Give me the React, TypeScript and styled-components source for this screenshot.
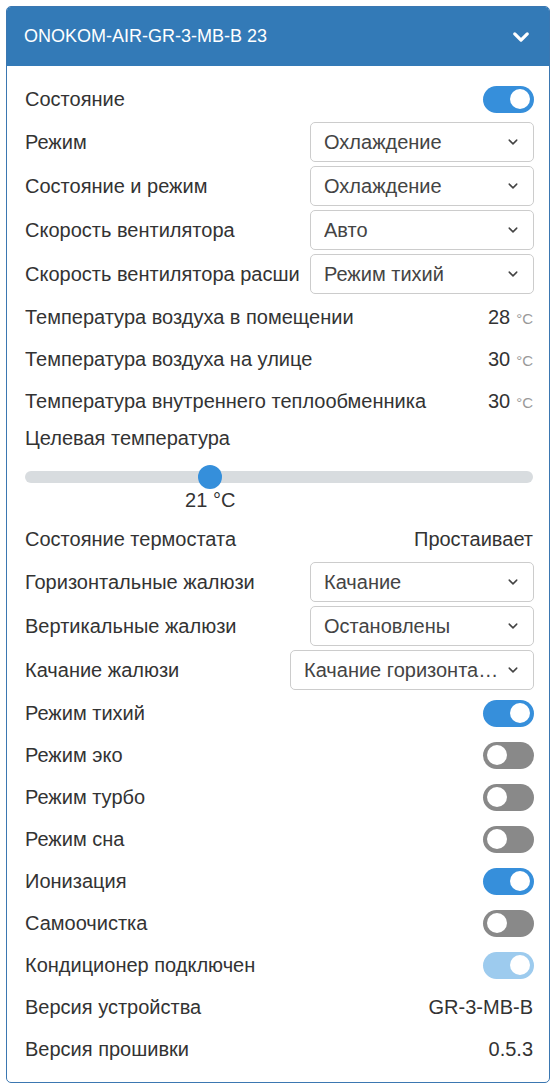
import React from "react";
import styled, { createGlobalStyle } from "styled-components";

const Global = createGlobalStyle`
  html, body { margin: 0; padding: 0; background: #fff; }
  body { font-family: "Liberation Sans", Arial, sans-serif; color: #333; }
  * { box-sizing: border-box; }
`;

const Page = styled.div`
  padding: 6px;
`;

const Card = styled.div`
  border: 1px solid #3b77b1;
  border-radius: 5px;
  overflow: hidden;
  background: #fff;
`;

const Header = styled.div`
  height: 59px;
  background: #337ab7;
  color: #fff;
  display: flex;
  align-items: center;
  justify-content: space-between;
  padding: 0 18px 0 17px;
  font-size: 18px;
`;

const Body = styled.div`
  padding: 12px 15px 12px 18px;
  display: flex;
  flex-direction: column;
`;

const Row = styled.div<{ $h: number }>`
  height: ${(p) => p.$h}px;
  display: flex;
  align-items: center;
  justify-content: space-between;
  gap: 10px;
  font-size: 20px;
`;

const Label = styled.div`
  flex: 1 1 auto;
  min-width: 0;
  overflow: hidden;
  white-space: nowrap;
  color: #333;
`;

const Value = styled.div`
  flex: 0 0 auto;
  white-space: nowrap;
  color: #333;
  padding-right: 1px;
`;

const Unit = styled.span`
  font-size: 15px;
  color: #999;
  margin-left: 6px;
`;

const SelectBox = styled.div<{ $w: number }>`
  flex: 0 0 auto;
  width: ${(p) => p.$w}px;
  height: 40px;
  border: 1px solid #ccc;
  border-radius: 5px;
  display: flex;
  align-items: center;
  justify-content: space-between;
  gap: 6px;
  padding: 0 14px 0 13px;
  color: #444;
  font-size: 20px;
  background: #fff;
`;

const SelectText = styled.span`
  overflow: hidden;
  white-space: nowrap;
  text-overflow: ellipsis;
  min-width: 0;
`;

const Switch = styled.div<{ $on: boolean; $disabled?: boolean }>`
  flex: 0 0 auto;
  width: 51px;
  height: 27px;
  border-radius: 14px;
  background: ${(p) =>
    p.$disabled ? "#9dcbee" : p.$on ? "#368fdb" : "#898989"};
  display: flex;
  align-items: center;
  justify-content: ${(p) => (p.$on ? "flex-end" : "flex-start")};
  padding: 0 4px;
`;

const Knob = styled.div`
  width: 20px;
  height: 20px;
  border-radius: 50%;
  background: #fff;
`;

const SliderBlock = styled.div`
  height: 64px;
  display: flex;
  flex-direction: column;
  padding-top: 17px;
`;

const Track = styled.div`
  position: relative;
  height: 12px;
  border-radius: 6px;
  background: #d8dcdf;
  margin-right: 1px;
`;

const Thumb = styled.div`
  position: absolute;
  top: 50%;
  width: 24px;
  height: 24px;
  margin: -12px 0 0 -12px;
  border-radius: 50%;
  background: #358fdb;
`;

const SliderValue = styled.div`
  position: relative;
  height: 30px;
  font-size: 20px;
  color: #333;
`;

const SliderValueText = styled.span`
  position: absolute;
  top: 6px;
  transform: translateX(-50%);
  white-space: nowrap;
`;

const Chevron = ({ size, stroke, color }: { size: number; stroke: number; color: string }) => (
  <svg width={size} height={size} viewBox="0 0 16 16" fill="none" style={{ flex: "0 0 auto" }}>
    <path d="M3 5.5 L8 10.5 L13 5.5" stroke={color} strokeWidth={stroke} strokeLinecap="round" strokeLinejoin="round" />
  </svg>
);

type Item =
  | { kind: "switch"; label: string; on: boolean; disabled?: boolean }
  | { kind: "select"; label: string; value: string; w?: number }
  | { kind: "text"; label: string; value: string; unit?: string }
  | { kind: "title"; label: string }
  | { kind: "slider"; value: number; min: number; max: number };

const items: Item[] = [
  { kind: "switch", label: "Состояние", on: true },
  { kind: "select", label: "Режим", value: "Охлаждение" },
  { kind: "select", label: "Состояние и режим", value: "Охлаждение" },
  { kind: "select", label: "Скорость вентилятора", value: "Авто" },
  { kind: "select", label: "Скорость вентилятора расширенная", value: "Режим тихий" },
  { kind: "text", label: "Температура воздуха в помещении", value: "28", unit: "°C" },
  { kind: "text", label: "Температура воздуха на улице", value: "30", unit: "°C" },
  { kind: "text", label: "Температура внутреннего теплообменника", value: "30", unit: "°C" },
  { kind: "title", label: "Целевая температура" },
  { kind: "slider", value: 21, min: 16, max: 30 },
  { kind: "text", label: "Состояние термостата", value: "Простаивает" },
  { kind: "select", label: "Горизонтальные жалюзи", value: "Качание" },
  { kind: "select", label: "Вертикальные жалюзи", value: "Остановлены" },
  { kind: "select", label: "Качание жалюзи", value: "Качание горизонтальное", w: 244 },
  { kind: "switch", label: "Режим тихий", on: true },
  { kind: "switch", label: "Режим эко", on: false },
  { kind: "switch", label: "Режим турбо", on: false },
  { kind: "switch", label: "Режим сна", on: false },
  { kind: "switch", label: "Ионизация", on: true },
  { kind: "switch", label: "Самоочистка", on: false },
  { kind: "switch", label: "Кондиционер подключен", on: true, disabled: true },
  { kind: "text", label: "Версия устройства", value: "GR-3-MB-B" },
  { kind: "text", label: "Версия прошивки", value: "0.5.3" },
];

export default function App() {
  return (
    <>
      <Global />
      <Page>
        <Card>
          <Header>
            <span>ONOKOM-AIR-GR-3-MB-B 23</span>
            <Chevron size={20} stroke={2.6} color="#fff" />
          </Header>
          <Body>
            {items.map((it, i) => {
              switch (it.kind) {
                case "switch":
                  return (
                    <Row key={i} $h={42}>
                      <Label>{it.label}</Label>
                      <Switch $on={it.on} $disabled={it.disabled}>
                        <Knob />
                      </Switch>
                    </Row>
                  );
                case "select":
                  return (
                    <Row key={i} $h={44}>
                      <Label>{it.label}</Label>
                      <SelectBox $w={it.w ?? 224}>
                        <SelectText>{it.value}</SelectText>
                        <Chevron size={12} stroke={2} color="#444" />
                      </SelectBox>
                    </Row>
                  );
                case "text":
                  return (
                    <Row key={i} $h={42}>
                      <Label>{it.label}</Label>
                      <Value>
                        {it.value}
                        {it.unit && <Unit>{it.unit}</Unit>}
                      </Value>
                    </Row>
                  );
                case "title":
                  return (
                    <Row key={i} $h={32}>
                      <Label>{it.label}</Label>
                    </Row>
                  );
                case "slider": {
                  const frac = (it.value - it.min) / (it.max - it.min);
                  const pos = `calc(12px + ${frac} * (100% - 24px))`;
                  return (
                    <SliderBlock key={i}>
                      <Track>
                        <Thumb style={{ left: pos }} />
                      </Track>
                      <SliderValue>
                        <SliderValueText style={{ left: pos }}>{it.value} °C</SliderValueText>
                      </SliderValue>
                    </SliderBlock>
                  );
                }
              }
            })}
          </Body>
        </Card>
      </Page>
    </>
  );
}
